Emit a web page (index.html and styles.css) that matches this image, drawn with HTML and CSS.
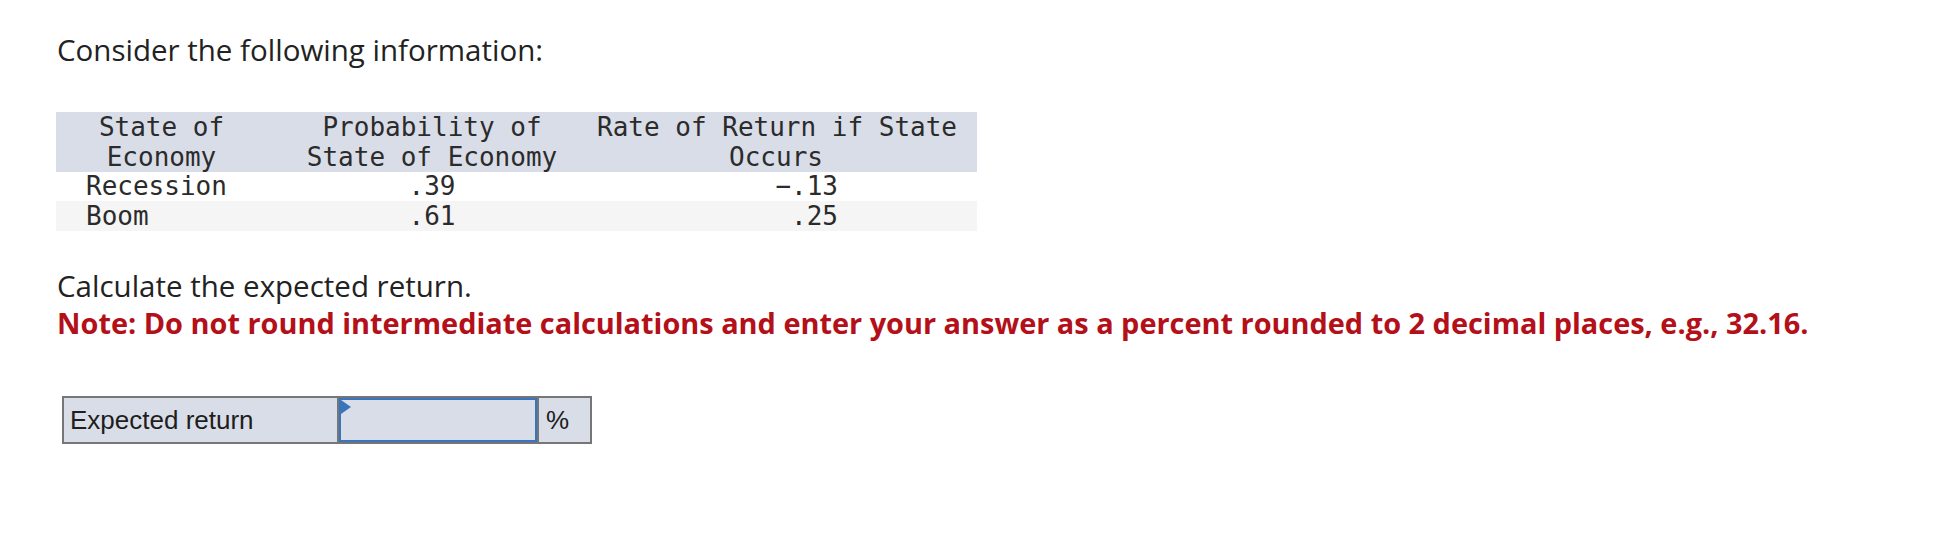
FILE: index.html
```html
<!DOCTYPE html>
<html lang="en">
<head>
<meta charset="utf-8">
<title>Expected return</title>
<link rel="stylesheet" href="styles.css">
</head>
<body>
<main class="question">
  <p class="intro">Consider the following information:</p>
  <div class="data">
    <div class="row head">
      <div class="c1">State of<br>Economy</div>
      <div class="c2">Probability of<br>State of Economy</div>
      <div class="c3">Rate of Return if State<br>Occurs</div>
    </div>
    <div class="row body">
      <div class="c1">Recession</div>
      <div class="c2">.39</div>
      <div class="c3">&minus;.13</div>
    </div>
    <div class="row body alt">
      <div class="c1">Boom</div>
      <div class="c2">.61</div>
      <div class="c3">.25</div>
    </div>
  </div>
  <p class="ask">Calculate the expected return.</p>
  <p class="note">Note: Do not round intermediate calculations and enter your answer as a percent rounded to 2 decimal places, e.g., 32.16.</p>
  <div class="answer">
    <div class="label">Expected return</div>
    <div class="field"><span class="flag"></span></div>
    <div class="unit">%</div>
  </div>
</main>
</body>
</html>
```
FILE: styles.css
```css
html, body {
  margin: 0;
  background: #ffffff;
}
body {
  font-family: "Open Sans", Lato, sans-serif;
  color: #222222;
}
.question {
  padding: 32px 0 0 57px;
}
.intro {
  margin: 0;
  font-size: 29.5px;
  line-height: 36px;
}
.data {
  margin: 44px 0 0 -1px;
  width: 921px;
  font-family: "DejaVu Sans Mono", monospace;
  font-size: 26px;
  color: #2b2b2b;
  white-space: nowrap;
}
.row {
  display: grid;
  grid-template-columns: 211px 330px 380px;
}
.head {
  background: #d9dde8;
  line-height: 30px;
  text-align: center;
}
.head .c3 {
  padding-right: 22px;
}
.body {
  line-height: 29px;
}
.body.alt {
  background: #f5f5f5;
  line-height: 30px;
}
.body .c1 {
  padding-left: 30px;
}
.body .c2 {
  text-align: center;
}
.body .c3 {
  text-align: right;
  padding-right: 139px;
}
.ask {
  margin: 37px 0 2px;
  font-size: 29.5px;
  line-height: 35px;
}
.note {
  margin: 0;
  font-size: 28.9px;
  line-height: 35px;
  font-weight: 700;
  color: #b3101a;
}
.answer {
  margin: 56px 0 0 5px;
  display: flex;
  width: 526px;
  height: 44px;
  border: 2px solid #767676;
  background: #d9dde8;
  font-family: "Liberation Sans", Arial, sans-serif;
  font-size: 26px;
  color: #1e1e1e;
}
.label {
  width: 267px;
  padding-left: 6px;
  display: flex;
  align-items: center;
  border-right: 2px solid #767676;
}
.field {
  position: relative;
  width: 194px;
  border: 2px solid #3a74bd;
}
.flag {
  position: absolute;
  left: 0;
  top: 0;
  width: 0;
  height: 0;
  border-top: 7px solid transparent;
  border-bottom: 7px solid transparent;
  border-left: 10px solid #3a74bd;
}
.unit {
  flex: 1;
  display: flex;
  align-items: center;
  padding-left: 7px;
  border-left: 2px solid #767676;
}
```
